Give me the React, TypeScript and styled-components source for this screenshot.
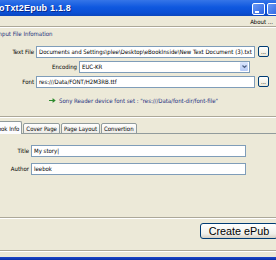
import styled, { createGlobalStyle } from 'styled-components';

const GlobalStyle = createGlobalStyle`
	html, body {
		margin: 0;
		padding: 0;
		background: #ece9d8;
		overflow: hidden;
	}
	body {
		font-family: "DejaVu Sans Condensed", "DejaVu Sans", sans-serif;
	}
`;

const Window = styled.div`
	width: 276px;
	height: 260px;
	display: flex;
	flex-direction: column;
	background: #ece9d8;
	overflow: hidden;
`;

const TitleBar = styled.div`
	height: 16px;
	flex: none;
	display: flex;
	align-items: center;
	justify-content: space-between;
	background: linear-gradient(#3575e8, #0f58df 45%, #0a4fd4 80%, #0b46bd);
`;

const TitleText = styled.span`
	color: #fff;
	font-family: "Liberation Sans", Arial, sans-serif;
	font-weight: 700;
	font-size: 9px;
	letter-spacing: 0.2px;
	margin-left: -1px;
	text-shadow: 1px 1px 0 #0a2a8a;
	white-space: nowrap;
`;

const CaptionButtons = styled.div`
	display: flex;
	gap: 2px;
	margin-right: -4px;
	align-self: flex-start;
	margin-top: 3px;
`;

const CaptionButton = styled.div<{ $min?: boolean }>`
	width: 9px;
	height: 9px;
	border: 1px solid #fff;
	border-radius: 2px;
	background: linear-gradient(135deg, #6b9af5, #2c64e2);
	display: flex;
	align-items: flex-end;
	padding: 0 0 1px 2px;
	box-sizing: content-box;
	&::after {
		content: '';
		display: ${({ $min }) => ($min ? 'block' : 'none')};
		width: 4px;
		height: 2px;
		background: #fff;
	}
`;

const MenuRow = styled.div`
	height: 10px;
	flex: none;
	display: flex;
	justify-content: flex-end;
	align-items: center;
	padding-right: 3px;
	font-size: 6px;
	color: #000;
`;

const Etched = styled.div<{ $top?: number }>`
	height: 0;
	flex: none;
	border-top: 1px solid #aca899;
	border-bottom: 1px solid #fff;
	margin-top: ${({ $top }) => $top ?? 0}px;
`;

const GroupTitle = styled.div`
	height: 9px;
	flex: none;
	margin: 1px 0 0 -3px;
	font-size: 6px;
	color: #22307a;
	display: flex;
	align-items: center;
`;

const Form = styled.div`
	display: flex;
	flex-direction: column;
	gap: 2px;
	margin-top: 7px;
	flex: none;
`;

const Row = styled.div`
	display: flex;
	align-items: center;
	gap: 2px;
	height: 13px;
	flex: none;
`;

const Label = styled.div<{ $w: number }>`
	width: ${({ $w }) => $w}px;
	flex: none;
	text-align: right;
	font-size: 6px;
	color: #000;
	white-space: nowrap;
`;

const Field = styled.div<{ $w: number }>`
	width: ${({ $w }) => $w}px;
	height: 12px;
	flex: none;
	box-sizing: border-box;
	border: 1px solid #7f9db9;
	background: #fff;
	display: flex;
	align-items: center;
	padding: 0 2px;
	overflow: hidden;
	font-size: 6px;
	color: #000;
	white-space: nowrap;
`;

const Select = styled(Field)`
	justify-content: space-between;
	padding-right: 1px;
`;

const DropArrow = styled.div`
	width: 8px;
	height: 9px;
	border-radius: 1px;
	background: linear-gradient(#dbe6fd, #b7cbf7);
	display: flex;
	align-items: center;
	justify-content: center;
`;

const SmallButton = styled.div`
	width: 11px;
	height: 11px;
	flex: none;
	box-sizing: border-box;
	margin-left: 1px;
	border: 1px solid #003c74;
	border-radius: 2px;
	background: linear-gradient(#fff, #ece9d8);
	font-size: 6px;
	display: flex;
	align-items: flex-end;
	justify-content: center;
	line-height: 8px;
	color: #000;
`;

const Note = styled.div`
	margin: 7px 0 0 49px;
	height: 10px;
	display: flex;
	align-items: center;
	gap: 3px;
	font-size: 6px;
	color: #1e2f80;
	white-space: nowrap;
	flex: none;
`;

const TabStrip = styled.div`
	display: flex;
	align-items: flex-end;
	height: 13px;
	flex: none;
	margin-top: 3px;
	margin-left: -9px;
	position: relative;
	z-index: 1;
`;

const Tab = styled.div<{ $active?: boolean }>`
	height: ${({ $active }) => ($active ? 13 : 11)}px;
	box-sizing: border-box;
	padding: 0 2px;
	margin-right: 1px;
	border: 1px solid #919b9c;
	border-bottom: ${({ $active }) => ($active ? 'none' : '1px solid #919b9c')};
	border-radius: 2px 2px 0 0;
	background: ${({ $active }) => ($active ? '#fcfcfe' : 'linear-gradient(#fff, #ecebe6)')};
	font-size: 6px;
	color: #000;
	display: flex;
	align-items: center;
	white-space: nowrap;
`;

const TabPanel = styled.div`
	border-top: 1px solid #919b9c;
	margin-top: -1px;
	height: 84px;
	flex: none;
	display: flex;
	flex-direction: column;
	gap: 5px;
	padding-top: 10px;
	box-sizing: border-box;
`;

const Footer = styled.div`
	height: 31px;
	flex: none;
	display: flex;
	align-items: flex-start;
	justify-content: flex-end;
	padding-top: 4px;
	box-sizing: border-box;
	margin-right: -2px;
`;

const BigButton = styled.div`
	width: 78px;
	height: 16px;
	box-sizing: border-box;
	border: 1px solid #003c74;
	border-radius: 3px;
	background: linear-gradient(#fff, #f0f0ea 70%, #d6d0c5);
	font-family: "Liberation Sans", Arial, sans-serif;
	font-size: 10.8px;
	color: #000;
	display: flex;
	align-items: center;
	justify-content: center;
`;

const Spacer = styled.div`
	flex: 1;
`;

const BottomBorder = styled.div`
	height: 3px;
	flex: none;
	background: linear-gradient(#1c46c9, #0a31a8);
`;

function Arrow() {
	return (
		<svg width="5" height="5" viewBox="0 0 5 5">
			<path d="M0.5 1.5 L2.5 3.5 L4.5 1.5" fill="none" stroke="#4d6185" strokeWidth="1.2" />
		</svg>
	);
}

function GoArrow() {
	return (
		<svg width="7" height="5" viewBox="0 0 7 5">
			<path d="M0 2.5 H5 M3.5 0.8 L5.8 2.5 L3.5 4.2" fill="none" stroke="#2d8a2d" strokeWidth="1.1" />
		</svg>
	);
}

export default function App() {
	return (
		<>
			<GlobalStyle />
			<Window>
				<TitleBar>
					<TitleText>oTxt2Epub 1.1.8</TitleText>
					<CaptionButtons>
						<CaptionButton $min />
						<CaptionButton />
					</CaptionButtons>
				</TitleBar>
				<MenuRow>About ...</MenuRow>
				<Etched />
				<GroupTitle>Input File Infomation</GroupTitle>
				<Form>
					<Row>
						<Label $w={34}>Text File</Label>
						<Field $w={219}>
							Documents and Settings\plee\Desktop\eBookInside\New Text Document (3).txt
						</Field>
						<SmallButton>...</SmallButton>
					</Row>
					<Row>
						<Label $w={77}>Encoding</Label>
						<Select $w={171}>
							EUC-KR
							<DropArrow>
								<Arrow />
							</DropArrow>
						</Select>
					</Row>
					<Row>
						<Label $w={34}>Font</Label>
						<Field $w={219}>res:///Data/FONT/H2M3RB.ttf</Field>
						<SmallButton>...</SmallButton>
					</Row>
				</Form>
				<Note>
					<GoArrow />
					Sony Reader device font set : "res:///Data/font-dir/font-file"
				</Note>
				<Etched $top={11} />
				<TabStrip>
					<Tab $active>Book Info</Tab>
					<Tab>Cover Page</Tab>
					<Tab>Page Layout</Tab>
					<Tab>Convertion</Tab>
				</TabStrip>
				<TabPanel>
					<Row>
						<Label $w={29}>Title</Label>
						<Field $w={215}>My story|</Field>
					</Row>
					<Row>
						<Label $w={29}>Author</Label>
						<Field $w={215}>leebok</Field>
					</Row>
				</TabPanel>
				<Etched />
				<Footer>
					<BigButton>Create ePub</BigButton>
				</Footer>
				<Etched />
				<Spacer />
				<BottomBorder />
			</Window>
		</>
	);
}
